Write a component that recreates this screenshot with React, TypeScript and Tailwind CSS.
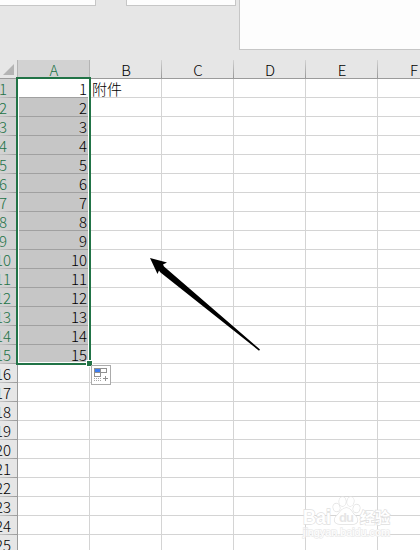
import * as React from "react";

const columns = ["B", "C", "D", "E"];
const rows = Array.from({ length: 25 }, (_, i) => i + 1);
const SELECTED_ROWS = 15;

function TopPanels() {
  return (
    <div className="flex h-[60px] items-start">
      <div className="h-1.5 w-24 shrink-0 border-r border-b border-[#c6c6c6] bg-[#fdfdfd]" />
      <div className="ml-[30px] h-1.5 w-[110px] shrink-0 border-x border-b border-[#c6c6c6] bg-[#fdfdfd]" />
      <div className="ml-[3px] h-[50px] flex-1 border-b border-l border-[#c6c6c6] bg-[#fdfdfd]" />
    </div>
  );
}

function ColumnDivider() {
  return <span className="h-full w-px shrink-0 bg-linear-to-b from-[#d2d2d2] to-[#999999]" />;
}

function HeaderRow() {
  return (
    <div className="flex h-[19px] border-b border-[#9b9b9b] leading-[20px]">
      <div className="flex w-[18px] shrink-0">
        <svg className="h-[18px] w-[17px]" viewBox="0 0 17 18">
          <path d="M14 4V15H3Z" fill="#b4b4b4" />
        </svg>
        <span className="h-full w-px bg-[#b4b4b4]" />
      </div>
      <div className="flex w-[72px] shrink-0 bg-[#d2d2d2] text-[#217346]">
        <span className="flex-1 pl-px text-center">A</span>
        <span className="h-full w-px bg-[#b4b4b4]" />
      </div>
      {columns.map((name) => (
        <div key={name} className="flex w-[72px] shrink-0">
          <span className="flex-1 pl-px text-center">{name}</span>
          <ColumnDivider />
        </div>
      ))}
      <div className="w-[72px] shrink-0 text-center">F</div>
    </div>
  );
}

function RowNumber({ row, selected }: { row: number; selected: boolean }) {
  return (
    <div
      className={
        selected
          ? "flex h-[19px] w-[18px] shrink-0 flex-col border-r border-[#ababab] bg-[#d2d2d2] text-[#217346]"
          : "flex h-[19px] w-[18px] shrink-0 flex-col border-r border-[#9b9b9b] bg-[#e6e6e6]"
      }
    >
      {/* numbers are centred in a header that runs past the left edge */}
      <span className="-ml-[11px] h-[18px] w-7 text-center">{row}</span>
      <span className="h-px w-full bg-linear-to-r from-[#c6c6c6] to-[#9b9b9b]" />
    </div>
  );
}

function SheetRow({ row }: { row: number }) {
  const selected = row <= SELECTED_ROWS;
  return (
    <div className="flex h-[19px] leading-[20px]">
      <RowNumber row={row} selected={selected} />
      <div
        className={
          selected
            ? row === 1
              ? "w-[72px] shrink-0 border-b border-[#a0a0a0] bg-white pr-[3px] text-right"
              : "w-[72px] shrink-0 border-b border-[#a0a0a0] bg-[#c6c6c6] pr-[3px] text-right"
            : "w-[72px] shrink-0 border-r border-b border-[#d4d4d4]"
        }
      >
        {selected ? row : null}
      </div>
      {columns.map((name) => (
        <div
          key={name}
          className="w-[72px] shrink-0 border-r border-b border-[#d4d4d4] pl-[2px] leading-[19px] whitespace-nowrap"
        >
          {row === 1 && name === "B" ? "附件" : null}
        </div>
      ))}
      <div className="w-[72px] shrink-0 border-b border-[#d4d4d4]" />
    </div>
  );
}

function Selection() {
  return (
    <>
      <div className="absolute top-[77px] left-4 h-[288px] w-[75px] border-2 border-[#217346]">
        <div className="h-full w-full border border-white" />
      </div>
      <div className="absolute top-[360px] left-[86px] size-[7px] border border-white bg-[#217346]" />
      <svg className="absolute top-[365px] left-[91px] size-5" viewBox="0 0 20 20" shapeRendering="crispEdges">
        <path d="M.5 .5H19.5V19.5H.5Z" fill="#fff" stroke="#ababab" />
        <path d="M3.5 3.5H15.5V7.5H3.5ZM3.5 7.5V11.5H9.5V3.5" fill="none" stroke="#909090" />
        <path d="M4 4H9V7H4Z" fill="#3f7df0" />
        <path d="M3 13.5H4M5 13.5H6M7 13.5H8M9 13.5H10M3 15.5H4M5 15.5H6M7 15.5H8M9 15.5H10" stroke="#a8a8a8" />
        <path d="M12 13.5H17M14.5 11V16" stroke="#909090" />
      </svg>
    </>
  );
}

function Arrow() {
  return (
    <svg className="absolute top-[250px] left-[140px] h-[110px] w-[130px]" viewBox="0 0 130 110">
      <path d="M10 8L27 12.5L23 14.5L24 16.5L120 99.5L119 100.7L20.5 22.5L19 20.5L17.5 24Z" fill="#000" />
    </svg>
  );
}

function Watermark() {
  return (
    <svg
      className="absolute top-[490px] left-[298px] h-[52px] w-[100px] font-['Liberation_Sans','Noto_Sans_CJK_SC',sans-serif]"
      viewBox="0 0 100 52"
    >
      <g fill="#fff" stroke="#e0e0e0" strokeWidth="1.4" paintOrder="stroke">
        <text x="5" y="33.5" fontSize="20" fontWeight="bold" textLength="28" lengthAdjust="spacingAndGlyphs">
          Bai
        </text>
        <ellipse cx="38.5" cy="17.5" rx="3.2" ry="4" transform="rotate(-15 38.5 17.5)" />
        <ellipse cx="44.5" cy="11.5" rx="3.3" ry="4.5" />
        <ellipse cx="52.5" cy="11.5" rx="3.3" ry="4.5" transform="rotate(10 52.5 11.5)" />
        <ellipse cx="58.5" cy="18.5" rx="3.2" ry="4" transform="rotate(15 58.5 18.5)" />
        <path d="M48.5 18C53 18 54 23 57 25.5C61 29 60 34 55 34H42C36 34 35 29 39 25.5C42 23 43.5 18 48.5 18Z" />
        <text x="41" y="32" fontSize="13" fontWeight="bold" fill="#e6e6e6" stroke="none" textLength="15">
          du
        </text>
        <text x="62" y="32.5" fontSize="15" fontWeight="bold" textLength="30">
          经验
        </text>
        <text x="5" y="45.5" fontSize="10" textLength="87" stroke="#ebebeb" lengthAdjust="spacingAndGlyphs">
          jingyan.baidu.com
        </text>
      </g>
    </svg>
  );
}

export default function App() {
  return (
    <div className="relative h-[550px] w-[420px] overflow-hidden bg-[#e6e6e6] font-['Noto_Sans_CJK_SC',sans-serif] text-[15px] font-light text-black">
      <TopPanels />
      <HeaderRow />
      <div className="bg-white">
        {rows.map((row) => (
          <SheetRow key={row} row={row} />
        ))}
      </div>
      <Selection />
      <Arrow />
      <Watermark />
    </div>
  );
}
